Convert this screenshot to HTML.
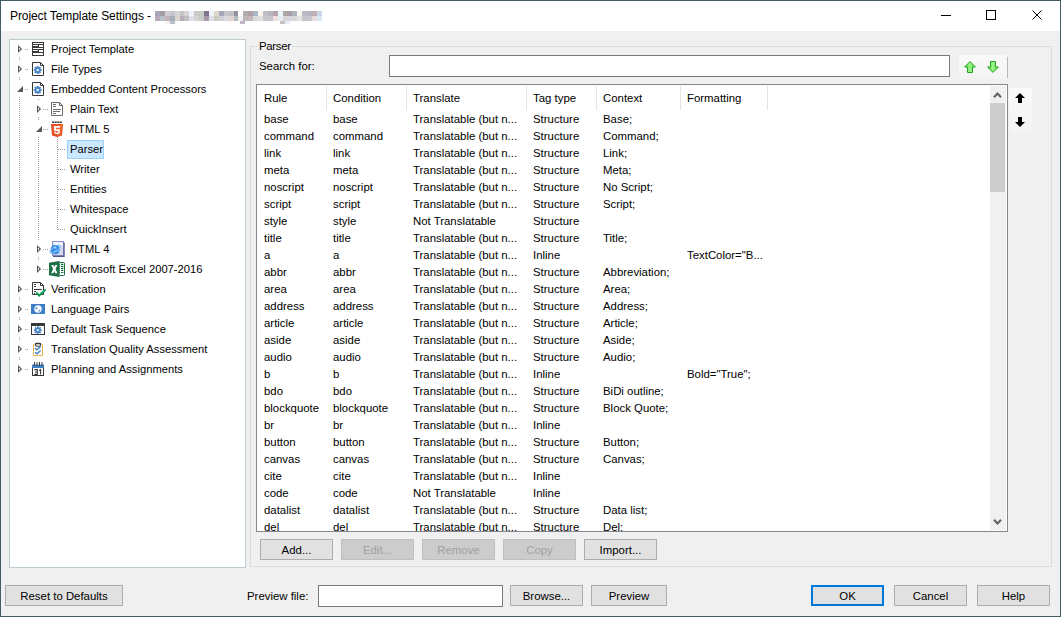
<!DOCTYPE html>
<html><head><meta charset="utf-8"><style>
*{box-sizing:border-box;margin:0;padding:0}
html,body{width:1061px;height:617px;overflow:hidden;background:#f0f0f0}
body{font-family:"Liberation Sans",sans-serif;font-size:11.4px;color:#000;position:relative}
.a{position:absolute}
.t{position:absolute;white-space:nowrap;line-height:14px}
#frame{left:0;top:0;width:1061px;height:617px;border:1px solid #435c63}
#title{left:1px;top:1px;width:1059px;height:30px;background:#fff}
.btn{position:absolute;height:21px;border:1px solid #adadad;background:#e1e1e1;text-align:center;line-height:20px}
.btn.dis{color:#a0a0a0;border-color:#bfbfbf;background:#cccccc}
.input{position:absolute;background:#fff;border:1px solid #7a7a7a}
#tree{left:9px;top:39px;width:237px;height:529px;background:#fff;border:1px solid #bccbd2}
#group{left:250px;top:46px;width:802px;height:521px;border:1px solid #dcdcdc}
#list{left:256px;top:84px;width:752px;height:448px;background:#fff;border:1px solid #828790;overflow:hidden}
.tr{font-size:11.2px}
.li{font-size:11.4px}
.vl{position:absolute;width:1px;background-image:linear-gradient(#a0a0a0 50%,transparent 50%);background-size:1px 2px}
.hl{position:absolute;height:1px;background-image:linear-gradient(90deg,#a0a0a0 50%,transparent 50%);background-size:2px 1px}
svg{position:absolute;overflow:visible}
</style></head><body>
<div id="title" class="a"></div>
<div class="t" style="left:10px;top:9px;font-size:12px;letter-spacing:-0.08px">Project Template Settings - </div>
<div class="a" style="left:155px;top:11px;width:167px;height:10px;display:flex;flex-direction:column">
<div style="display:flex;height:5px"><div style="flex:1;background:#a9a3bb"></div><div style="flex:1;background:#a39ea5"></div><div style="flex:1;background:#d1cdd0"></div><div style="flex:1;background:#c3c5cc"></div><div style="flex:1;background:#d8d6d8"></div><div style="flex:1;background:#c7c4c8"></div><div style="flex:1;background:#d5d5d5"></div><div style="flex:1;background:#eef4fb"></div><div style="flex:1;background:#cdc9c8"></div><div style="flex:1;background:#c8ccc0"></div><div style="flex:1;background:#7f7390"></div><div style="flex:1;background:#eef4fb"></div><div style="flex:1;background:#ded8c8"></div><div style="flex:1;background:#a7a6bd"></div><div style="flex:1;background:#c7c7cb"></div><div style="flex:1;background:#c2c0c2"></div><div style="flex:1;background:#958fa0"></div><div style="flex:1;background:#ffffff"></div><div style="flex:1;background:#b3aaad"></div><div style="flex:1;background:#b0a0a5"></div><div style="flex:1;background:#a8b8c8"></div><div style="flex:1;background:#f5f5ee"></div><div style="flex:1;background:#c3bfc6"></div><div style="flex:1;background:#b9b5bd"></div><div style="flex:1;background:#b5a5ad"></div><div style="flex:1;background:#e8f4fa"></div><div style="flex:1;background:#b0a5a5"></div><div style="flex:1;background:#a89ea8"></div><div style="flex:1;background:#aab5bd"></div><div style="flex:1;background:#f6f6ee"></div><div style="flex:1;background:#bbb9c3"></div><div style="flex:1;background:#b8b5c0"></div><div style="flex:1;background:#c0b0b5"></div><div style="flex:1;background:#c8d8e8"></div></div>
<div style="display:flex;height:5px"><div style="flex:1;background:#b9abbd"></div><div style="flex:1;background:#b8c0c8"></div><div style="flex:1;background:#c0b4b8"></div><div style="flex:1;background:#a8aeb8"></div><div style="flex:1;background:#d8d4d0"></div><div style="flex:1;background:#b7adb8"></div><div style="flex:1;background:#c0c0c0"></div><div style="flex:1;background:#dde0ea"></div><div style="flex:1;background:#d8d2d2"></div><div style="flex:1;background:#c8ccc8"></div><div style="flex:1;background:#a899a8"></div><div style="flex:1;background:#dde0e8"></div><div style="flex:1;background:#cbcbc0"></div><div style="flex:1;background:#d0d0d5"></div><div style="flex:1;background:#dadae0"></div><div style="flex:1;background:#e0d4d4"></div><div style="flex:1;background:#b0bcc0"></div><div style="flex:1;background:#f0f0f0"></div><div style="flex:1;background:#c0b6b8"></div><div style="flex:1;background:#c8b8bb"></div><div style="flex:1;background:#d5dce0"></div><div style="flex:1;background:#e0e0e0"></div><div style="flex:1;background:#c8c4ca"></div><div style="flex:1;background:#c8c4cc"></div><div style="flex:1;background:#f0e0e0"></div><div style="flex:1;background:#e4eef5"></div><div style="flex:1;background:#d8d4da"></div><div style="flex:1;background:#d8d6da"></div><div style="flex:1;background:#d8d8d8"></div><div style="flex:1;background:#e5e5e5"></div><div style="flex:1;background:#c4c4cc"></div><div style="flex:1;background:#c7c7cd"></div><div style="flex:1;background:#e8dcdc"></div><div style="flex:1;background:#d8e8f5"></div></div>
</div>
<div class="a" style="left:165px;top:21px;width:5px;height:3px;background:#f5f2ee"></div><div class="a" style="left:170px;top:21px;width:5px;height:3px;background:#b8c0c8"></div><div class="a" style="left:240px;top:21px;width:5px;height:3px;background:#c0b8c8"></div><div class="a" style="left:280px;top:21px;width:5px;height:3px;background:#c8c0c0"></div><div class="a" style="left:285px;top:21px;width:5px;height:3px;background:#e8eef5"></div>
<div class="a" style="left:941px;top:15px;width:10px;height:1px;background:#000"></div>
<div class="a" style="left:986px;top:10px;width:10px;height:10px;border:1px solid #000"></div>
<svg style="left:1032px;top:10px" width="10" height="10"><path d="M0.5 0.5L9.5 9.5M9.5 0.5L0.5 9.5" stroke="#000" stroke-width="1"/></svg>
<div class="a" id="tree"></div>
<div class="vl" style="left:19px;top:45px;height:325px"></div>
<div class="vl" style="left:38px;top:99px;height:171px"></div>
<div class="vl" style="left:57px;top:137px;height:93px"></div>
<div class="hl" style="left:25px;top:49px;width:4px"></div>
<div class="a" style="left:16px;top:41px;width:7px;height:16px;background:#fff"></div>
<svg style="left:18px;top:45px" width="8" height="10"><path d="M0 0L4.1 4L0 8Z" fill="#595959"/><path d="M1 2.6L2.4 4L1 5.4Z" fill="#fff"/></svg>
<svg style="left:30px;top:41px" width="16" height="16"><rect x="2" y="1" width="12" height="14" fill="#383838"/><rect x="3" y="2" width="10" height="1" fill="#fff"/><rect x="3" y="4" width="5" height="1" fill="#fff"/><rect x="9" y="4" width="4" height="2" fill="#fff"/><rect x="3" y="7" width="10" height="1" fill="#fff"/><rect x="3" y="9" width="5" height="1" fill="#fff"/><rect x="9" y="9" width="4" height="2" fill="#fff"/><rect x="3" y="12" width="10" height="2" fill="#fff"/></svg>
<div class="t tr" style="left:51px;top:42px">Project Template</div>
<div class="hl" style="left:25px;top:69px;width:4px"></div>
<div class="a" style="left:16px;top:61px;width:7px;height:16px;background:#fff"></div>
<svg style="left:18px;top:65px" width="8" height="10"><path d="M0 0L4.1 4L0 8Z" fill="#595959"/><path d="M1 2.6L2.4 4L1 5.4Z" fill="#fff"/></svg>
<svg style="left:30px;top:61px" width="16" height="16"><path d="M2.5 1.5H10.5L13.5 4.5V14.5H2.5Z" fill="#fff" stroke="#383838"/><path d="M10.5 1.5V4.5H13.5" fill="none" stroke="#383838"/><g transform="translate(7.7,9)" fill="#4584c8"><circle r="2.9"/><path d="M-0.9 -4H0.9V4H-0.9Z"/><path d="M-0.9 -4H0.9V4H-0.9Z" transform="rotate(45)"/><path d="M-0.9 -4H0.9V4H-0.9Z" transform="rotate(90)"/><path d="M-0.9 -4H0.9V4H-0.9Z" transform="rotate(135)"/><circle r="1.2" fill="#fff"/></g></svg>
<div class="t tr" style="left:51px;top:62px">File Types</div>
<div class="hl" style="left:25px;top:89px;width:4px"></div>
<div class="a" style="left:16px;top:81px;width:7px;height:16px;background:#fff"></div>
<svg style="left:17px;top:86px" width="7" height="7"><path d="M0 6L6 0V6Z" fill="#595959"/></svg>
<svg style="left:30px;top:81px" width="16" height="16"><path d="M2.5 1.5H10.5L13.5 4.5V14.5H2.5Z" fill="#fff" stroke="#383838"/><path d="M10.5 1.5V4.5H13.5" fill="none" stroke="#383838"/><g transform="translate(7.7,9)" fill="#4584c8"><circle r="2.9"/><path d="M-0.9 -4H0.9V4H-0.9Z"/><path d="M-0.9 -4H0.9V4H-0.9Z" transform="rotate(45)"/><path d="M-0.9 -4H0.9V4H-0.9Z" transform="rotate(90)"/><path d="M-0.9 -4H0.9V4H-0.9Z" transform="rotate(135)"/><circle r="1.2" fill="#fff"/></g></svg>
<div class="t tr" style="left:51px;top:82px">Embedded Content Processors</div>
<div class="hl" style="left:43px;top:109px;width:6px"></div>
<div class="a" style="left:35px;top:101px;width:7px;height:16px;background:#fff"></div>
<svg style="left:37px;top:105px" width="8" height="10"><path d="M0 0L4.1 4L0 8Z" fill="#595959"/><path d="M1 2.6L2.4 4L1 5.4Z" fill="#fff"/></svg>
<svg style="left:49px;top:101px" width="16" height="16"><path d="M2.5 1.5H10.5L13.5 4.5V14.5H2.5Z" fill="#fff" stroke="#6a6a6a"/><path d="M10.5 1.5V4.5H13.5" fill="none" stroke="#6a6a6a"/><path d="M4 3.5H7M4 5.5H7M4 8.5H12M4 10.5H11M4 12.5H7" stroke="#6a6a6a"/></svg>
<div class="t tr" style="left:70px;top:102px">Plain Text</div>
<div class="hl" style="left:43px;top:129px;width:6px"></div>
<div class="a" style="left:35px;top:121px;width:7px;height:16px;background:#fff"></div>
<svg style="left:36px;top:126px" width="7" height="7"><path d="M0 6L6 0V6Z" fill="#595959"/></svg>
<svg style="left:49px;top:121px" width="16" height="17"><path d="M2 3H14L13 14.5L8 16L3 14.5Z" fill="#e44d26"/><path d="M8 4H13L12.2 13.8L8 15Z" fill="#f16529"/><path d="M4.8 5H11.2L11 6.8H6.8L6.9 8.2H10.9L10.6 12.3L8 13.2L5.4 12.3L5.3 10.7H7L7.1 11.4L8 11.7L9 11.4L9.1 10H5.2Z" fill="#fff"/><path d="M3 1.2H13" stroke="#3a3a3a" stroke-width="1.6" stroke-dasharray="2.1 0.5"/></svg>
<div class="t tr" style="left:70px;top:122px">HTML 5</div>
<div class="hl" style="left:58px;top:149px;width:8px"></div>
<div class="a" style="left:67px;top:140px;width:37px;height:19px;background:#cce8ff;border:1px solid #99d1ff"></div>
<div class="t tr" style="left:70px;top:142px">Parser</div>
<div class="hl" style="left:58px;top:169px;width:8px"></div>
<div class="t tr" style="left:70px;top:162px">Writer</div>
<div class="hl" style="left:58px;top:189px;width:8px"></div>
<div class="t tr" style="left:70px;top:182px">Entities</div>
<div class="hl" style="left:58px;top:209px;width:8px"></div>
<div class="t tr" style="left:70px;top:202px">Whitespace</div>
<div class="hl" style="left:58px;top:229px;width:8px"></div>
<div class="t tr" style="left:70px;top:222px">QuickInsert</div>
<div class="hl" style="left:43px;top:249px;width:6px"></div>
<div class="a" style="left:35px;top:241px;width:7px;height:16px;background:#fff"></div>
<svg style="left:37px;top:245px" width="8" height="10"><path d="M0 0L4.1 4L0 8Z" fill="#595959"/><path d="M1 2.6L2.4 4L1 5.4Z" fill="#fff"/></svg>
<svg style="left:49px;top:241px" width="17" height="17"><rect x="3.5" y="0.5" width="11" height="14" fill="#d4d7f2" stroke="#8c90c8"/><rect x="4.5" y="1.5" width="9" height="3" fill="#fff"/><path d="M15.1 1.5V15.4H4" stroke="#55588a" stroke-width="1.2" fill="none"/><text x="6" y="13.4" font-family="Liberation Sans" font-weight="bold" font-size="17" text-anchor="middle" fill="#2a8ae6" stroke="#2a8ae6" stroke-width="0.6">e</text><ellipse cx="6" cy="8" rx="6.2" ry="2.2" fill="none" stroke="#6cc0f8" stroke-width="1" transform="rotate(-38 6 8)"/></svg>
<div class="t tr" style="left:70px;top:242px">HTML 4</div>
<div class="hl" style="left:43px;top:269px;width:6px"></div>
<div class="a" style="left:35px;top:261px;width:7px;height:16px;background:#fff"></div>
<svg style="left:37px;top:265px" width="8" height="10"><path d="M0 0L4.1 4L0 8Z" fill="#595959"/><path d="M1 2.6L2.4 4L1 5.4Z" fill="#fff"/></svg>
<svg style="left:49px;top:261px" width="17" height="17"><rect x="9.5" y="1.5" width="6" height="13" rx="0.8" fill="#fff" stroke="#1d7044"/><path d="M12 3.4H14.4M12 5.4H14.4M12 7.4H14.4M12 9.4H14.4M12 11.5H14.4M10 3.4H11M10 5.4H11M10 7.4H11M10 9.4H11M10 11.5H11" stroke="#1d7044" stroke-width="1.1"/><path d="M0 1.8L10.5 0V16L0 14.2Z" fill="#1d7044"/><path d="M2.2 4H4.5L5.3 6.3L6.1 4H8.4L6.5 8L8.5 12.2H6.2L5.3 9.9L4.4 12.2H2.1L4.1 8Z" fill="#fff"/></svg>
<div class="t tr" style="left:70px;top:262px">Microsoft Excel 2007-2016</div>
<div class="hl" style="left:25px;top:289px;width:4px"></div>
<div class="a" style="left:16px;top:281px;width:7px;height:16px;background:#fff"></div>
<svg style="left:18px;top:285px" width="8" height="10"><path d="M0 0L4.1 4L0 8Z" fill="#595959"/><path d="M1 2.6L2.4 4L1 5.4Z" fill="#fff"/></svg>
<svg style="left:30px;top:281px" width="17" height="16"><path d="M2.5 1.5H10.5L13.5 4.5V13.5H2.5Z" fill="#fff" stroke="#383838"/><path d="M10.5 1.5V4.5H13.5" fill="none" stroke="#383838"/><path d="M4 3.5H6M4 5.5H6M4 8.5H12M4 10.5H6M4 12.5H5" stroke="#383838"/><path d="M6.2 11.4L9.2 14.6L15.6 8.4" fill="none" stroke="#119c5a" stroke-width="2.1"/></svg>
<div class="t tr" style="left:51px;top:282px">Verification</div>
<div class="hl" style="left:25px;top:309px;width:4px"></div>
<div class="a" style="left:16px;top:301px;width:7px;height:16px;background:#fff"></div>
<svg style="left:18px;top:305px" width="8" height="10"><path d="M0 0L4.1 4L0 8Z" fill="#595959"/><path d="M1 2.6L2.4 4L1 5.4Z" fill="#fff"/></svg>
<svg style="left:30px;top:301px" width="16" height="16"><rect x="1" y="3" width="14" height="10" fill="#3f7fc6"/><circle cx="8" cy="8" r="3.7" fill="#fff"/><path d="M5.2 6.8Q6.5 5.2 7.6 6.4L7 8.6L5.6 8.4Z M8.6 9L10.4 8.4L10 10.6L8.4 10.8Z" fill="#6f9fd8"/></svg>
<div class="t tr" style="left:51px;top:302px">Language Pairs</div>
<div class="hl" style="left:25px;top:329px;width:4px"></div>
<div class="a" style="left:16px;top:321px;width:7px;height:16px;background:#fff"></div>
<svg style="left:18px;top:325px" width="8" height="10"><path d="M0 0L4.1 4L0 8Z" fill="#595959"/><path d="M1 2.6L2.4 4L1 5.4Z" fill="#fff"/></svg>
<svg style="left:30px;top:321px" width="16" height="16"><rect x="1.5" y="2.5" width="13" height="11" fill="#fff" stroke="#383838"/><rect x="1" y="2" width="14" height="3" fill="#383838"/><g transform="translate(7.8,9.2)" fill="#4584c8"><circle r="2.8"/><path d="M-0.8 -4H0.8V4H-0.8Z"/><path d="M-0.8 -4H0.8V4H-0.8Z" transform="rotate(45)"/><path d="M-0.8 -4H0.8V4H-0.8Z" transform="rotate(90)"/><path d="M-0.8 -4H0.8V4H-0.8Z" transform="rotate(135)"/><circle r="1.1" fill="#fff"/></g></svg>
<div class="t tr" style="left:51px;top:322px">Default Task Sequence</div>
<div class="hl" style="left:25px;top:349px;width:4px"></div>
<div class="a" style="left:16px;top:341px;width:7px;height:16px;background:#fff"></div>
<svg style="left:18px;top:345px" width="8" height="10"><path d="M0 0L4.1 4L0 8Z" fill="#595959"/><path d="M1 2.6L2.4 4L1 5.4Z" fill="#fff"/></svg>
<svg style="left:30px;top:341px" width="16" height="16"><path d="M4.5 3.5H3.5V14.5H12.5V3.5H11.5" fill="none" stroke="#e9b44c"/><rect x="5.5" y="2.3" width="5" height="3" rx="1.2" fill="#fff" stroke="#383838" stroke-width="1.1"/><rect x="5" y="2" width="6" height="1.3" fill="#383838"/><path d="M5 7.2L7 8.8L10.6 5.6M5 11.2L7 12.8L10.6 9.6" fill="none" stroke="#3f7fc6" stroke-width="1.4"/></svg>
<div class="t tr" style="left:51px;top:342px">Translation Quality Assessment</div>
<div class="hl" style="left:25px;top:369px;width:4px"></div>
<div class="a" style="left:16px;top:361px;width:7px;height:16px;background:#fff"></div>
<svg style="left:18px;top:365px" width="8" height="10"><path d="M0 0L4.1 4L0 8Z" fill="#595959"/><path d="M1 2.6L2.4 4L1 5.4Z" fill="#fff"/></svg>
<svg style="left:30px;top:361px" width="16" height="16"><rect x="2.5" y="4.5" width="11" height="10" fill="#fff" stroke="#383838"/><rect x="2" y="3.5" width="12" height="3.5" fill="#3f7fc6"/><path d="M4.5 1V5M7 1V5M9.5 1V5M12 1V5" stroke="#383838"/><path d="M4.3 8.6H7.3V13.4H4.3M5 11H7.3M9.2 9.6L10.6 8.6V13.6" fill="none" stroke="#383838" stroke-width="1.1"/></svg>
<div class="t tr" style="left:51px;top:362px">Planning and Assignments</div>
<div class="a" id="group"></div>
<div class="t" style="left:257px;top:39px;width:35px;overflow:hidden;background:#f0f0f0;padding:0 0 0 2px;letter-spacing:-0.3px">Parser</div>
<div class="t" style="left:259px;top:59px">Search for:</div>
<div class="input" style="left:389px;top:55px;width:561px;height:22px"></div>
<div class="a" style="left:959px;top:55px;width:48px;height:24px;background:linear-gradient(#fafafa,#f3f3f3);border-radius:3px"></div><div class="a" style="left:1007px;top:57px;width:1px;height:21px;background:#b8b8b8"></div>
<svg style="left:964px;top:61px" width="12" height="12"><defs><linearGradient id="gg" x1="0" x2="1" y1="0" y2="0"><stop offset="0" stop-color="#4fd83a"/><stop offset="0.5" stop-color="#9cf58a"/><stop offset="1" stop-color="#4fd83a"/></linearGradient></defs><path d="M6 0.6L11.4 6H8.5V11.5H3.5V6H0.6Z" fill="url(#gg)" stroke="#22a622"/></svg>
<svg style="left:987px;top:61px" width="12" height="12"><path d="M6 11.4L11.4 6H8.5V0.5H3.5V6H0.6Z" fill="url(#gg)" stroke="#22a622"/></svg>
<div class="a" style="left:1009px;top:88px;width:23px;height:47px;background:linear-gradient(#fafafa,#f3f3f3);border-radius:3px"></div>
<svg style="left:1015px;top:93px" width="11" height="11"><path d="M5 0L10 5H7V10H3V5H0Z" fill="#000"/></svg>
<svg style="left:1015px;top:117px" width="11" height="11"><path d="M5 10L10 5H7V0H3V5H0Z" fill="#000"/></svg>
<div class="a" id="list">
<div class="a" style="left:69px;top:1px;width:1px;height:24px;background:#e5e5e5"></div>
<div class="a" style="left:149px;top:1px;width:1px;height:24px;background:#e5e5e5"></div>
<div class="a" style="left:269px;top:1px;width:1px;height:24px;background:#e5e5e5"></div>
<div class="a" style="left:339px;top:1px;width:1px;height:24px;background:#e5e5e5"></div>
<div class="a" style="left:423px;top:1px;width:1px;height:24px;background:#e5e5e5"></div>
<div class="a" style="left:510px;top:1px;width:1px;height:24px;background:#e5e5e5"></div>
<div class="t li" style="left:7px;top:6px">Rule</div>
<div class="t li" style="left:76px;top:6px">Condition</div>
<div class="t li" style="left:156px;top:6px">Translate</div>
<div class="t li" style="left:276px;top:6px">Tag type</div>
<div class="t li" style="left:346px;top:6px">Context</div>
<div class="t li" style="left:430px;top:6px">Formatting</div>
<div class="t li" style="left:7px;top:27px">base</div>
<div class="t li" style="left:76px;top:27px">base</div>
<div class="t li" style="left:156px;top:27px">Translatable (but n...</div>
<div class="t li" style="left:276px;top:27px">Structure</div>
<div class="t li" style="left:346px;top:27px">Base;</div>
<div class="t li" style="left:7px;top:44px">command</div>
<div class="t li" style="left:76px;top:44px">command</div>
<div class="t li" style="left:156px;top:44px">Translatable (but n...</div>
<div class="t li" style="left:276px;top:44px">Structure</div>
<div class="t li" style="left:346px;top:44px">Command;</div>
<div class="t li" style="left:7px;top:61px">link</div>
<div class="t li" style="left:76px;top:61px">link</div>
<div class="t li" style="left:156px;top:61px">Translatable (but n...</div>
<div class="t li" style="left:276px;top:61px">Structure</div>
<div class="t li" style="left:346px;top:61px">Link;</div>
<div class="t li" style="left:7px;top:78px">meta</div>
<div class="t li" style="left:76px;top:78px">meta</div>
<div class="t li" style="left:156px;top:78px">Translatable (but n...</div>
<div class="t li" style="left:276px;top:78px">Structure</div>
<div class="t li" style="left:346px;top:78px">Meta;</div>
<div class="t li" style="left:7px;top:95px">noscript</div>
<div class="t li" style="left:76px;top:95px">noscript</div>
<div class="t li" style="left:156px;top:95px">Translatable (but n...</div>
<div class="t li" style="left:276px;top:95px">Structure</div>
<div class="t li" style="left:346px;top:95px">No Script;</div>
<div class="t li" style="left:7px;top:112px">script</div>
<div class="t li" style="left:76px;top:112px">script</div>
<div class="t li" style="left:156px;top:112px">Translatable (but n...</div>
<div class="t li" style="left:276px;top:112px">Structure</div>
<div class="t li" style="left:346px;top:112px">Script;</div>
<div class="t li" style="left:7px;top:129px">style</div>
<div class="t li" style="left:76px;top:129px">style</div>
<div class="t li" style="left:156px;top:129px">Not Translatable</div>
<div class="t li" style="left:276px;top:129px">Structure</div>
<div class="t li" style="left:7px;top:146px">title</div>
<div class="t li" style="left:76px;top:146px">title</div>
<div class="t li" style="left:156px;top:146px">Translatable (but n...</div>
<div class="t li" style="left:276px;top:146px">Structure</div>
<div class="t li" style="left:346px;top:146px">Title;</div>
<div class="t li" style="left:7px;top:163px">a</div>
<div class="t li" style="left:76px;top:163px">a</div>
<div class="t li" style="left:156px;top:163px">Translatable (but n...</div>
<div class="t li" style="left:276px;top:163px">Inline</div>
<div class="t li" style="left:430px;top:163px">TextColor=&quot;B...</div>
<div class="t li" style="left:7px;top:180px">abbr</div>
<div class="t li" style="left:76px;top:180px">abbr</div>
<div class="t li" style="left:156px;top:180px">Translatable (but n...</div>
<div class="t li" style="left:276px;top:180px">Structure</div>
<div class="t li" style="left:346px;top:180px">Abbreviation;</div>
<div class="t li" style="left:7px;top:197px">area</div>
<div class="t li" style="left:76px;top:197px">area</div>
<div class="t li" style="left:156px;top:197px">Translatable (but n...</div>
<div class="t li" style="left:276px;top:197px">Structure</div>
<div class="t li" style="left:346px;top:197px">Area;</div>
<div class="t li" style="left:7px;top:214px">address</div>
<div class="t li" style="left:76px;top:214px">address</div>
<div class="t li" style="left:156px;top:214px">Translatable (but n...</div>
<div class="t li" style="left:276px;top:214px">Structure</div>
<div class="t li" style="left:346px;top:214px">Address;</div>
<div class="t li" style="left:7px;top:231px">article</div>
<div class="t li" style="left:76px;top:231px">article</div>
<div class="t li" style="left:156px;top:231px">Translatable (but n...</div>
<div class="t li" style="left:276px;top:231px">Structure</div>
<div class="t li" style="left:346px;top:231px">Article;</div>
<div class="t li" style="left:7px;top:248px">aside</div>
<div class="t li" style="left:76px;top:248px">aside</div>
<div class="t li" style="left:156px;top:248px">Translatable (but n...</div>
<div class="t li" style="left:276px;top:248px">Structure</div>
<div class="t li" style="left:346px;top:248px">Aside;</div>
<div class="t li" style="left:7px;top:265px">audio</div>
<div class="t li" style="left:76px;top:265px">audio</div>
<div class="t li" style="left:156px;top:265px">Translatable (but n...</div>
<div class="t li" style="left:276px;top:265px">Structure</div>
<div class="t li" style="left:346px;top:265px">Audio;</div>
<div class="t li" style="left:7px;top:282px">b</div>
<div class="t li" style="left:76px;top:282px">b</div>
<div class="t li" style="left:156px;top:282px">Translatable (but n...</div>
<div class="t li" style="left:276px;top:282px">Inline</div>
<div class="t li" style="left:430px;top:282px">Bold=&quot;True&quot;;</div>
<div class="t li" style="left:7px;top:299px">bdo</div>
<div class="t li" style="left:76px;top:299px">bdo</div>
<div class="t li" style="left:156px;top:299px">Translatable (but n...</div>
<div class="t li" style="left:276px;top:299px">Structure</div>
<div class="t li" style="left:346px;top:299px">BiDi outline;</div>
<div class="t li" style="left:7px;top:316px">blockquote</div>
<div class="t li" style="left:76px;top:316px">blockquote</div>
<div class="t li" style="left:156px;top:316px">Translatable (but n...</div>
<div class="t li" style="left:276px;top:316px">Structure</div>
<div class="t li" style="left:346px;top:316px">Block Quote;</div>
<div class="t li" style="left:7px;top:333px">br</div>
<div class="t li" style="left:76px;top:333px">br</div>
<div class="t li" style="left:156px;top:333px">Translatable (but n...</div>
<div class="t li" style="left:276px;top:333px">Inline</div>
<div class="t li" style="left:7px;top:350px">button</div>
<div class="t li" style="left:76px;top:350px">button</div>
<div class="t li" style="left:156px;top:350px">Translatable (but n...</div>
<div class="t li" style="left:276px;top:350px">Structure</div>
<div class="t li" style="left:346px;top:350px">Button;</div>
<div class="t li" style="left:7px;top:367px">canvas</div>
<div class="t li" style="left:76px;top:367px">canvas</div>
<div class="t li" style="left:156px;top:367px">Translatable (but n...</div>
<div class="t li" style="left:276px;top:367px">Structure</div>
<div class="t li" style="left:346px;top:367px">Canvas;</div>
<div class="t li" style="left:7px;top:384px">cite</div>
<div class="t li" style="left:76px;top:384px">cite</div>
<div class="t li" style="left:156px;top:384px">Translatable (but n...</div>
<div class="t li" style="left:276px;top:384px">Inline</div>
<div class="t li" style="left:7px;top:401px">code</div>
<div class="t li" style="left:76px;top:401px">code</div>
<div class="t li" style="left:156px;top:401px">Not Translatable</div>
<div class="t li" style="left:276px;top:401px">Inline</div>
<div class="t li" style="left:7px;top:418px">datalist</div>
<div class="t li" style="left:76px;top:418px">datalist</div>
<div class="t li" style="left:156px;top:418px">Translatable (but n...</div>
<div class="t li" style="left:276px;top:418px">Structure</div>
<div class="t li" style="left:346px;top:418px">Data list;</div>
<div class="t li" style="left:7px;top:435px">del</div>
<div class="t li" style="left:76px;top:435px">del</div>
<div class="t li" style="left:156px;top:435px">Translatable (but n...</div>
<div class="t li" style="left:276px;top:435px">Structure</div>
<div class="t li" style="left:346px;top:435px">Del;</div>
<div class="a" style="left:733px;top:1px;width:16px;height:444px;background:#f0f0f0"></div>
<div class="a" style="left:733px;top:18px;width:15px;height:89px;background:#cdcdcd"></div>
<svg style="left:736px;top:6px" width="9" height="8"><path d="M1 6.2L4.5 2.6L8 6.2" fill="none" stroke="#606060" stroke-width="2.1"/></svg>
<svg style="left:736px;top:433px" width="9" height="8"><path d="M1 1.8L4.5 5.4L8 1.8" fill="none" stroke="#606060" stroke-width="2.1"/></svg>
</div>
<div class="btn" style="left:260px;top:539px;width:73px">Add...</div>
<div class="btn dis" style="left:341px;top:539px;width:73px">Edit...</div>
<div class="btn dis" style="left:422px;top:539px;width:73px">Remove</div>
<div class="btn dis" style="left:503px;top:539px;width:73px">Copy</div>
<div class="btn" style="left:584px;top:539px;width:73px">Import...</div>
<div class="btn" style="left:5px;top:585px;width:118px">Reset to Defaults</div>
<div class="t" style="left:247px;top:589px">Preview file:</div>
<div class="input" style="left:318px;top:585px;width:185px;height:22px"></div>
<div class="btn" style="left:510px;top:585px;width:73px">Browse...</div>
<div class="btn" style="left:591px;top:585px;width:76px">Preview</div>
<div class="btn" style="left:811px;top:585px;width:73px;border:2px solid #0078d7;line-height:18px">OK</div>
<div class="btn" style="left:894px;top:585px;width:73px">Cancel</div>
<div class="btn" style="left:977px;top:585px;width:73px">Help</div>
<div class="a" id="frame"></div>
</body></html>
